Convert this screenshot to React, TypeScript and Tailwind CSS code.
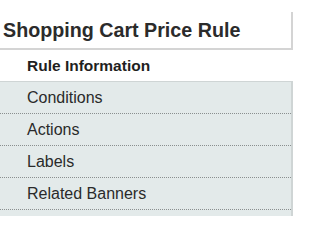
import React from "react";

const tabs = ["Conditions", "Actions", "Labels", "Related Banners"];

export default function App() {
  return (
    <div className="w-[300px] h-[216px] bg-white overflow-hidden pt-[12px] flex flex-col" style={{ fontFamily: '"Liberation Sans", Arial, sans-serif' }}>
      <div className="w-[293px] h-[38px] shrink-0 border-r-2 border-b-2 border-[#d4d4d4] pl-[3px] flex items-center">
        <h3 className="text-[19.7px] leading-none font-bold text-[#2b2b2b] mt-[1px]">Shopping Cart Price Rule</h3>
      </div>
      <div className="w-[292px] h-[31px] shrink-0 pl-[27px] flex items-center">
        <span className="text-[15.5px] font-bold text-[#1f1f1f]">Rule Information</span>
      </div>
      <div className="w-[293px] flex-1 border-t border-r-2 border-[#cfd5d5] bg-[#e3eaea]">
        {tabs.map((t) => (
          <div key={t} className="h-[32px] pl-[27px] flex items-center border-b border-dotted border-[#8a8f8f]">
            <span className="text-[16px] text-[#2a2a2a]">{t}</span>
          </div>
        ))}
      </div>
    </div>
  );
}
